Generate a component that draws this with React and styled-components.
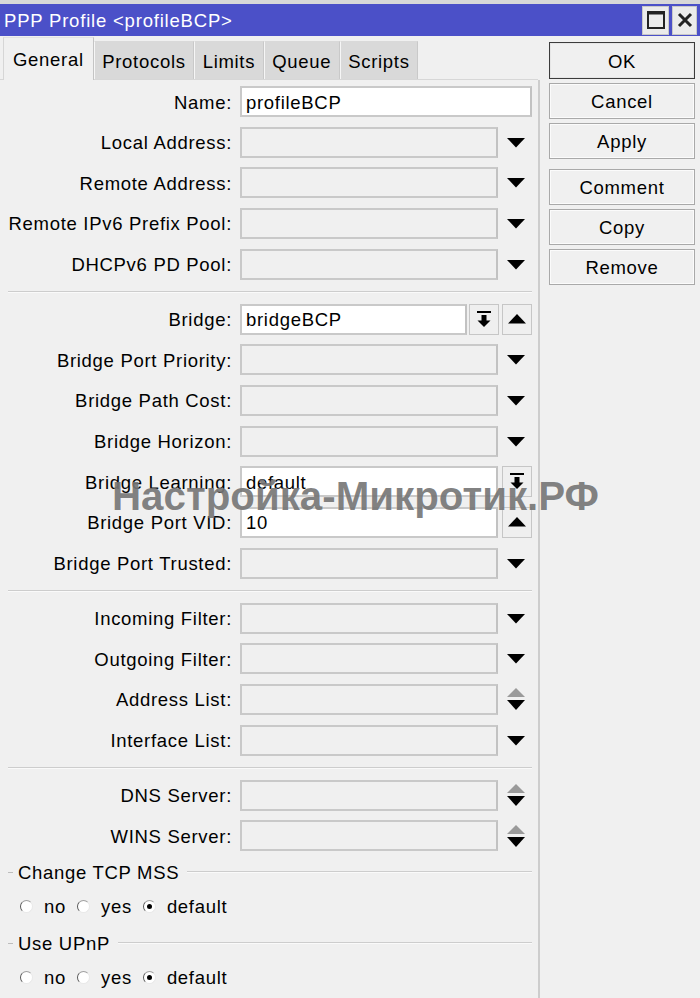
import React from "react";
import styled, { createGlobalStyle } from "styled-components";

const GlobalStyle = createGlobalStyle`
  html, body { margin: 0; padding: 0; background: #f0f0f0; }
  body { font-family: "Liberation Sans", Arial, sans-serif; }
  * { box-sizing: border-box; }
`;

const Window = styled.div`
  position: relative;
  width: 700px;
  height: 998px;
  overflow: hidden;
  background: #f0f0f0;
  display: flex;
  flex-direction: column;
  font-family: "Liberation Sans", Arial, sans-serif;
  font-size: 18.5px;
  letter-spacing: 0.7px;
  color: #000;
  border-top: 4px solid #d8d8d8;
`;

const TitleBar = styled.div`
  height: 32px;
  background: #4b50c8;
  display: flex;
  align-items: center;
  padding: 0 3px 0 4px;
  color: #fff;
`;

const TitleText = styled.div`
  flex: 1;
  white-space: nowrap;
  padding-top: 2px;
  letter-spacing: 0.8px;
`;

const TitleBtns = styled.div`
  display: flex;
  gap: 3px;
`;

const TitleBtn = styled.div`
  width: ${(p) => p.$w || 27}px;
  height: 29px;
  background: #ebebeb;
  border: 1px solid #c9c9c9;
  display: flex;
  align-items: center;
  justify-content: center;
`;

const Body = styled.div`
  flex: 1;
  display: flex;
`;

const LeftPane = styled.div`
  width: 540px;
  display: flex;
  flex-direction: column;
`;

const TabStrip = styled.div`
  height: 44px;
  display: flex;
  align-items: flex-end;
  padding-left: 3px;
  border-bottom: 1px solid #d7d7d7;
  margin-right: 2px;
`;

const Tab = styled.div`
  height: ${(p) => (p.$active ? 43 : 38)}px;
  padding: 2px ${(p) => (p.$active ? 9 : 7.5)}px 0;
  margin-bottom: ${(p) => (p.$active ? -1 : 0)}px;
  display: flex;
  align-items: center;
  background: ${(p) => (p.$active ? "#f0f0f0" : "#d9d9d9")};
  border-left: 1px solid ${(p) => (p.$active ? "#d6d6d6" : "#f6f6f6")};
  border-top: 1px solid ${(p) => (p.$active ? "#e2e2e2" : "#d9d9d9")};
  border-right: 1px solid ${(p) => (p.$active ? "#c4c4c4" : "#c9c9c9")};
  white-space: nowrap;
`;

const Panel = styled.div`
  flex: 1;
  border-right: 2px solid #cdcdcd;
  padding-top: 6px;
  display: flex;
  flex-direction: column;
`;

const Section = styled.div`
  display: flex;
  flex-direction: column;
  gap: 9.67px;
`;

const Row = styled.div`
  display: grid;
  grid-template-columns: 232px 292px;
  column-gap: 8px;
  height: 31px;
  align-items: center;
`;

const Label = styled.div`
  text-align: right;
  white-space: nowrap;
  padding-top: 2px;
`;

const FieldCell = styled.div`
  display: flex;
  height: 31px;
  align-items: stretch;
`;

const Input = styled.div`
  width: ${(p) => (p.$w ? `${p.$w}px` : "auto")};
  flex: ${(p) => (p.$w ? "none" : 1)};
  background: ${(p) => (p.$filled ? "#ffffff" : "#f0f0f0")};
  border: 2px solid #c9c9c9;
  border-right-color: #c2c2c2;
  display: flex;
  align-items: center;
  padding: 2px 0 0 4px;
  white-space: nowrap;
`;

const IconSlot = styled.div`
  width: 34px;
  display: flex;
  align-items: center;
  justify-content: center;
  padding: 1px 0 0 1px;
`;

const SquareBtn = styled.div`
  width: 30px;
  margin-left: ${(p) => p.$ml || 0}px;
  border: 1px solid #c6c6c6;
  background: #efefef;
  display: flex;
  align-items: center;
  justify-content: center;
`;

const Separator = styled.div`
  margin: 11px 8px 11px 8px;
  width: 524px;
  height: 2px;
  border-top: 1px solid #cdcdcd;
  border-bottom: 1px solid #fafafa;
`;

const GroupHeader = styled.div`
  display: flex;
  align-items: center;
  width: 524px;
  margin-left: 8px;
  height: 22px;
  margin-top: ${(p) => p.$mt || 0}px;
`;

const GroupDash = styled.div`
  width: 5px;
  height: 1px;
  background: #bdbdbd;
`;

const GroupTitle = styled.div`
  padding: 2px 8px 0 5px;
  white-space: nowrap;
`;

const GroupLine = styled.div`
  flex: 1;
  height: 2px;
  border-top: 1px solid #cdcdcd;
  border-bottom: 1px solid #fafafa;
`;

const RadioRow = styled.div`
  display: flex;
  align-items: center;
  gap: 11px;
  height: 22px;
  padding-left: 20px;
  margin-top: 12px;
`;

const RadioItem = styled.label`
  display: flex;
  align-items: center;
  gap: 11px;
  padding-top: 2px;
`;

const RadioCircle = styled.span`
  width: 13px;
  height: 13px;
  margin-top: -2px;
  border-radius: 50%;
  background: #fff;
  border: 1px solid;
  border-color: #a0a0a0 #e8e8e8 #e8e8e8 #555555;
  display: flex;
  align-items: center;
  justify-content: center;
  &::after {
    content: "";
    width: 5px;
    height: 5px;
    border-radius: 50%;
    background: ${(p) => (p.$checked ? "#000" : "transparent")};
  }
`;

const RightPane = styled.div`
  flex: 1;
  padding: 6px 5px 0 9px;
  display: flex;
  flex-direction: column;
  gap: 4px;
`;

const Button = styled.div`
  height: ${(p) => (p.$default ? 37 : 36)}px;
  display: flex;
  align-items: center;
  justify-content: center;
  padding-top: 2px;
  background: #f0f0f0;
  border: 1px solid ${(p) => (p.$default ? "#3c3c3c" : "#a9a9a9")};
  box-shadow: inset 0 0 0 1px ${(p) => (p.$default ? "#e6e6e6" : "#fbfbfb")};
  margin-top: ${(p) => p.$mt || 0}px;
  white-space: nowrap;
`;

const Watermark = styled.div`
  position: absolute;
  left: 112px;
  top: 470px;
  font-family: "Liberation Sans", Arial, sans-serif;
  font-weight: bold;
  font-size: 40.3px;
  letter-spacing: 0;
  color: rgba(96, 96, 96, 0.78);
  text-shadow: 0 0 1px rgba(255, 255, 255, 0.6);
  white-space: nowrap;
  pointer-events: none;
`;

const DownTri = () => (
  <svg width="18" height="10" viewBox="0 0 18 10">
    <polygon points="0,0 18,0 9,9.5" fill="#000" />
  </svg>
);

const UpTri = () => (
  <svg width="18" height="10" viewBox="0 0 18 10">
    <polygon points="0,9.5 18,9.5 9,0" fill="#000" />
  </svg>
);

const UpDown = () => (
  <svg width="18" height="23" viewBox="0 0 18 23">
    <polygon points="0,9 18,9 9,0" fill="#9a9a9a" />
    <polygon points="0,12 18,12 9,22" fill="#000" />
  </svg>
);

const BarDown = () => (
  <svg width="16" height="17" viewBox="0 0 16 17">
    <rect x="1" y="0" width="14" height="2" fill="#000" />
    <rect x="5.5" y="4" width="5" height="6" fill="#000" />
    <polygon points="1.5,9.5 14.5,9.5 8,16" fill="#000" />
  </svg>
);

const MaxIcon = () => (
  <svg width="18" height="18" viewBox="0 0 18 18">
    <rect x="1" y="1" width="16" height="16" fill="none" stroke="#222" strokeWidth="2" />
    <rect x="1" y="1" width="16" height="2.5" fill="#222" />
  </svg>
);

const CloseIcon = () => (
  <svg width="16" height="16" viewBox="0 0 16 16">
    <path d="M2 2 L14 14 M14 2 L2 14" stroke="#222" strokeWidth="3" />
  </svg>
);

const DropRow = ({ label, icon = "down" }) => (
  <Row>
    <Label>{label}</Label>
    <FieldCell>
      <Input $w={258} />
      <IconSlot>{icon === "updown" ? <UpDown /> : <DownTri />}</IconSlot>
    </FieldCell>
  </Row>
);

const RadioGroup = ({ title, mt }) => (
  <>
    <GroupHeader $mt={mt}>
      <GroupDash />
      <GroupTitle>{title}</GroupTitle>
      <GroupLine />
    </GroupHeader>
    <RadioRow>
      <RadioItem>
        <RadioCircle />
        no
      </RadioItem>
      <RadioItem>
        <RadioCircle />
        yes
      </RadioItem>
      <RadioItem>
        <RadioCircle $checked />
        default
      </RadioItem>
    </RadioRow>
  </>
);

export default function App() {
  return (
    <>
      <GlobalStyle />
      <Window>
        <TitleBar>
          <TitleText>PPP Profile &lt;profileBCP&gt;</TitleText>
          <TitleBtns>
            <TitleBtn>
              <MaxIcon />
            </TitleBtn>
            <TitleBtn $w={25}>
              <CloseIcon />
            </TitleBtn>
          </TitleBtns>
        </TitleBar>
        <Body>
          <LeftPane>
            <TabStrip>
              <Tab $active>General</Tab>
              <Tab>Protocols</Tab>
              <Tab>Limits</Tab>
              <Tab>Queue</Tab>
              <Tab>Scripts</Tab>
            </TabStrip>
            <Panel>
              <Section>
                <Row>
                  <Label>Name:</Label>
                  <FieldCell>
                    <Input $filled>profileBCP</Input>
                  </FieldCell>
                </Row>
                <DropRow label="Local Address:" />
                <DropRow label="Remote Address:" />
                <DropRow label="Remote IPv6 Prefix Pool:" />
                <DropRow label="DHCPv6 PD Pool:" />
              </Section>
              <Separator />
              <Section>
                <Row>
                  <Label>Bridge:</Label>
                  <FieldCell>
                    <Input $filled>bridgeBCP</Input>
                    <SquareBtn $ml={2}>
                      <BarDown />
                    </SquareBtn>
                    <SquareBtn $ml={3}>
                      <UpTri />
                    </SquareBtn>
                  </FieldCell>
                </Row>
                <DropRow label="Bridge Port Priority:" />
                <DropRow label="Bridge Path Cost:" />
                <DropRow label="Bridge Horizon:" />
                <Row>
                  <Label>Bridge Learning:</Label>
                  <FieldCell>
                    <Input $filled $w={258}>default</Input>
                    <SquareBtn $ml={4}>
                      <BarDown />
                    </SquareBtn>
                  </FieldCell>
                </Row>
                <Row>
                  <Label>Bridge Port VID:</Label>
                  <FieldCell>
                    <Input $filled $w={258}>10</Input>
                    <SquareBtn $ml={4}>
                      <UpTri />
                    </SquareBtn>
                  </FieldCell>
                </Row>
                <DropRow label="Bridge Port Trusted:" />
              </Section>
              <Separator />
              <Section>
                <DropRow label="Incoming Filter:" />
                <DropRow label="Outgoing Filter:" />
                <DropRow label="Address List:" icon="updown" />
                <DropRow label="Interface List:" />
              </Section>
              <Separator />
              <Section>
                <DropRow label="DNS Server:" icon="updown" />
                <DropRow label="WINS Server:" icon="updown" />
              </Section>
              <RadioGroup title="Change TCP MSS" mt={10} />
              <RadioGroup title="Use UPnP" mt={15} />
            </Panel>
          </LeftPane>
          <RightPane>
            <Button $default>OK</Button>
            <Button>Cancel</Button>
            <Button>Apply</Button>
            <Button $mt={6}>Comment</Button>
            <Button>Copy</Button>
            <Button>Remove</Button>
          </RightPane>
        </Body>
        <Watermark>Настройка-Микротик.РФ</Watermark>
      </Window>
    </>
  );
}
